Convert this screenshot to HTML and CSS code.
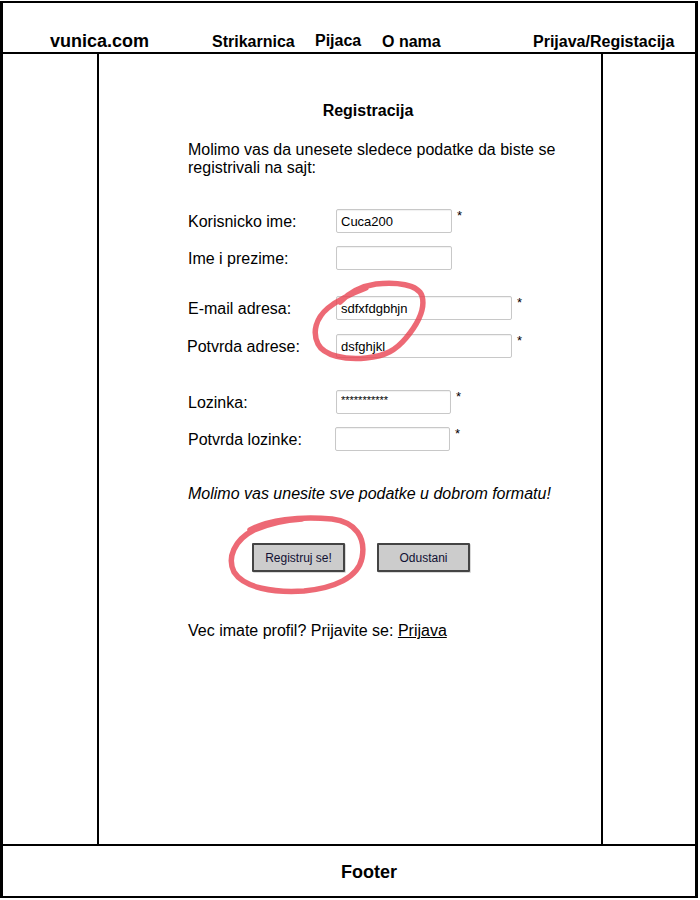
FILE: index.html
```html
<!DOCTYPE html>
<html lang="sr">
<head>
<meta charset="utf-8">
<title>vunica.com - Registracija</title>
<link rel="stylesheet" href="styles.css">
</head>
<body>
<div class="frame">
  <header class="topbar">
    <span class="nav-item brand">vunica.com</span>
    <span class="nav-item w-strik">Strikarnica</span>
    <span class="nav-item w-pijaca raised">Pijaca</span>
    <span class="nav-item w-onama">O nama</span>
    <span class="nav-item">Prijava/Registacija</span>
  </header>
  <main class="columns">
    <aside class="side side-left"></aside>
    <section class="content">
      <h1 class="title">Registracija</h1>
      <p class="intro">Molimo vas da unesete sledece podatke da biste se registrivali na sajt:</p>

      <div class="group group-1">
        <div class="row">
          <label class="label">Korisnicko ime:</label>
          <input class="field" type="text" value="Cuca200">
          <span class="req">*</span>
        </div>
        <div class="row">
          <label class="label">Ime i prezime:</label>
          <input class="field" type="text" value="">
        </div>
      </div>

      <div class="group group-2">
        <div class="row">
          <label class="label">E-mail adresa:</label>
          <input class="field field-wide" type="text" value="sdfxfdgbhjn">
          <span class="req">*</span>
        </div>
        <div class="row">
          <label class="label label-shift">Potvrda adrese:</label>
          <input class="field field-wide" type="text" value="dsfghjkl">
          <span class="req">*</span>
        </div>
      </div>

      <div class="group group-3">
        <div class="row">
          <label class="label">Lozinka:</label>
          <input class="field field-pass" type="text" value="***********">
          <span class="req">*</span>
        </div>
        <div class="row">
          <label class="label">Potvrda lozinke:</label>
          <input class="field field-narrow" type="text" value="">
          <span class="req">*</span>
        </div>
      </div>

      <p class="note">Molimo vas unesite sve podatke u dobrom formatu!</p>

      <div class="actions">
        <button class="btn" type="button">Registruj se!</button>
        <button class="btn" type="button">Odustani</button>
      </div>

      <p class="login">Vec imate profil? Prijavite se: <a class="link" href="#">Prijava</a></p>
    </section>
    <aside class="side side-right"></aside>
  </main>
  <footer class="footer">Footer</footer>
</div>

<svg class="marks" viewBox="0 0 700 900" width="700" height="900" aria-hidden="true">
  <defs>
    <filter id="soft" x="-10%" y="-10%" width="120%" height="120%">
      <feGaussianBlur stdDeviation="0.6"/>
    </filter>
  </defs>
  <g filter="url(#soft)" fill="none" stroke="#e8404d" stroke-opacity="0.78" stroke-width="5.5" stroke-linecap="round" stroke-linejoin="round">
    <path d="M 340 302 C 350 292, 362 286, 376 284 C 396 282, 418 284, 422 296 C 426 310, 416 326, 406 338 C 396 350, 386 356, 366 358 C 346 360, 324 356, 318 344 C 312 332, 316 318, 328 308 C 338 300, 350 294, 366 288"/>
    <path d="M 250 530 C 268 520, 298 516, 332 519 C 356 522, 366 538, 362 558 C 358 578, 334 588, 304 591 C 274 593, 244 588, 234 572 C 227 558, 234 540, 254 530 C 270 523, 286 520, 302 519"/>
  </g>
</svg>
</body>
</html>
```

FILE: styles.css
```css
* {
  box-sizing: border-box;
}

html, body {
  margin: 0;
  padding: 0;
  background: #ffffff;
}

body {
  position: relative;
  width: 700px;
  height: 900px;
  padding-top: 1px;
  font-family: "Liberation Sans", Arial, sans-serif;
  color: #000;
  overflow: hidden;
}

.frame {
  width: 698px;
  height: 897px;
  border-style: solid;
  border-color: #000;
  border-width: 2px 3px 2px 3px;
  display: flex;
  flex-direction: column;
}

/* Header */
.topbar {
  height: 51px;
  flex: 0 0 51px;
  border-bottom: 2px solid #000;
  display: flex;
  align-items: flex-end;
  padding-left: 47px;
}

.nav-item {
  font-weight: bold;
  font-size: 16px;
  line-height: 20px;
  white-space: nowrap;
}

.brand {
  width: 162px;
  font-size: 18px;
  padding-bottom: 1px;
}

.w-strik { width: 103px; }
.w-pijaca { width: 67px; }
.w-onama { width: 151px; }

.raised {
  padding-bottom: 1px;
}

/* Columns */
.columns {
  flex: 1 1 auto;
  display: grid;
  grid-template-columns: 96px 502px 94px;
}

.side-left {
  border-right: 2px solid #000;
}

.side-right {
  border-left: 2px solid #000;
}

.content {
  padding: 48px 0 0 89px;
  font-size: 16px;
  line-height: 18px;
}

.title {
  margin: 0;
  font-size: 16px;
  line-height: 18px;
  font-weight: bold;
  text-align: center;
  padding-right: 53px;
}

.intro {
  margin: 21px 0 0 0;
  width: 380px;
}

/* Form */
.group {
  display: flex;
  flex-direction: column;
  gap: 13px;
}

.group-1 { margin-top: 32px; }
.group-2 { margin-top: 26px; gap: 14px; }
.group-3 { margin-top: 32px; }

.row {
  display: flex;
  align-items: center;
  height: 24px;
}

.label {
  width: 148px;
  flex: 0 0 148px;
  padding-top: 2px;
  font-size: 16px;
  line-height: 18px;
}

.label-shift {
  margin-left: -1px;
  flex-basis: 149px;
  width: 149px;
}

.field {
  width: 116px;
  height: 24px;
  border: 1px solid #c8c8c8;
  border-radius: 2px;
  box-shadow: inset 0 1px 1px rgba(0, 0, 0, 0.06);
  padding: 0 4px;
  font-family: "Liberation Sans", Arial, sans-serif;
  font-size: 13px;
  color: #000;
  background: #fff;
  outline: none;
}

.field-wide {
  width: 176px;
}

.field-pass {
  width: 115px;
  font-size: 11px;
  padding-bottom: 4px;
}

.field-narrow {
  width: 115px;
  margin-left: -1px;
}

.req {
  align-self: flex-start;
  margin-left: 5px;
  font-size: 13px;
  line-height: 13px;
}

.note {
  margin: 34px 0 0 0;
  font-style: italic;
}

.actions {
  margin-top: 40px;
  padding-left: 64px;
  display: flex;
  gap: 32px;
}

.btn {
  width: 93px;
  height: 29px;
  background: #cccccc;
  border: 2px solid #444444;
  border-radius: 1px;
  box-shadow: 1px 1px 0 rgba(0, 0, 0, 0.15);
  font-family: "Comic Sans MS", "Liberation Sans", sans-serif;
  font-size: 12px;
  color: #111133;
  padding: 0;
}

.login {
  margin: 50px 0 0 0;
}

.link {
  color: #000;
  text-decoration: underline;
}

/* Footer */
.footer {
  flex: 0 0 52px;
  height: 52px;
  border-top: 2px solid #000;
  text-align: center;
  font-weight: bold;
  font-size: 18px;
  line-height: 52px;
  padding-left: 40px;
}

/* Hand-drawn highlight marks overlaying the wireframe */
.marks {
  position: absolute;
  left: 0;
  top: 0;
  pointer-events: none;
}
```
